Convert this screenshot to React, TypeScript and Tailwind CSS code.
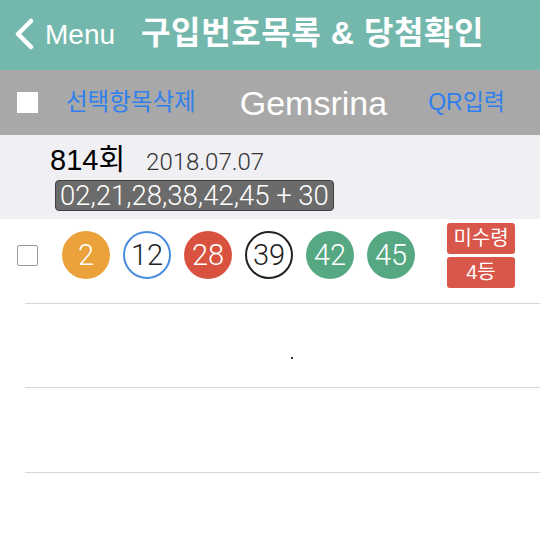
import React from "react";

const KR = { fontFamily: '"Liberation Sans", "Noto Sans CJK KR", sans-serif' };
const LIGHT = { fontFamily: 'Roboto, "Liberation Sans", "Noto Sans CJK KR", sans-serif' };

function Ball({ n, kind }: { n: string; kind: string }) {
  const cls =
    kind === "orange"
      ? "bg-[#eba23b] text-white"
      : kind === "red"
      ? "bg-[#d9523f] text-white"
      : kind === "green"
      ? "bg-[#55a882] text-white"
      : kind === "blue"
      ? "bg-white border-2 border-[#4a8de0] text-[#222]"
      : "bg-white border-2 border-[#222] text-[#222]";
  return (
    <div
      className={`w-[48px] h-[48px] rounded-full flex items-center justify-center text-[29px] font-light leading-none ${cls}`}
      style={LIGHT}
    >
      {n}
    </div>
  );
}

export default function App() {
  return (
    <div className="w-[540px] h-[540px] bg-white overflow-hidden flex flex-col" style={KR}>
      <div className="h-[70px] bg-[#74b8ad] flex items-center text-white">
        <svg width="22" height="32" viewBox="0 0 22 32" className="ml-[13px] mr-[10px] mb-[2px]">
          <path d="M18 3 L5 16 L18 29" fill="none" stroke="white" strokeWidth="4.5" strokeLinecap="round" strokeLinejoin="round" />
        </svg>
        <span className="text-[28px] leading-none mb-[1px]">Menu</span>
        <span className="ml-[26px] text-[32px] tracking-[0.6px] font-bold leading-none mb-[4px]">구입번호목록 &amp; 당첨확인</span>
      </div>
      <div className="h-[65px] bg-[#a8a8a8] flex items-center">
        <div className="ml-[17px] w-[21px] h-[21px] bg-white" />
        <span className="ml-[28px] text-[23.5px] text-[#2f7fee] leading-none">선택항목삭제</span>
        <span className="ml-[44px] text-[34px] text-white leading-none">Gemsrina</span>
        <span className="ml-auto mr-[35px] text-[23px] text-[#2f7fee] leading-none">QR입력</span>
      </div>
      <div className="h-[84px] bg-[#efeff4] flex flex-col pl-[50px] pt-[11px]">
        <div className="flex items-end">
          <span className="text-[29px] text-black leading-none">814회</span>
          <span className="ml-[21px] text-[24px] text-[#333] font-light leading-none mb-[1px]" style={LIGHT}>2018.07.07</span>
        </div>
        <div className="mt-[5px] ml-[5px] self-start h-[31px] px-[4px] bg-[#6b6b6b] border border-[#3e3e3e] rounded-[4px] flex items-center">
          <span className="text-[27.5px] text-white leading-none font-light" style={LIGHT}>02,21,28,38,42,45 + 30</span>
        </div>
      </div>
      <div className="h-[84px] flex items-center pb-[12px]">
        <div className="ml-[17px] w-[21px] h-[21px] border border-[#9a9a9a] rounded-[2px] bg-white" />
        <div className="ml-[24px] flex gap-[13px]">
          <Ball n="2" kind="orange" />
          <Ball n="12" kind="blue" />
          <Ball n="28" kind="red" />
          <Ball n="39" kind="black" />
          <Ball n="42" kind="green" />
          <Ball n="45" kind="green" />
        </div>
        <div className="ml-[32px] flex flex-col gap-[3px]">
          <div className="w-[68px] h-[31px] bg-[#d8574a] rounded-[3px] flex items-center justify-center text-white text-[20px] leading-none">미수령</div>
          <div className="w-[68px] h-[31px] bg-[#d8574a] rounded-[3px] flex items-center justify-center text-white text-[20px] leading-none">4등</div>
        </div>
      </div>
      <div className="ml-[25px] h-px bg-[#d8d8dc]" />
      <div className="h-[83px] flex items-center justify-center">
        <div className="w-[2px] h-[2px] bg-[#333] ml-[44px] mt-[24px]" />
      </div>
      <div className="ml-[25px] h-px bg-[#d8d8dc]" />
      <div className="h-[84px]" />
      <div className="ml-[25px] h-px bg-[#d8d8dc]" />
      <div className="flex-1" />
    </div>
  );
}
